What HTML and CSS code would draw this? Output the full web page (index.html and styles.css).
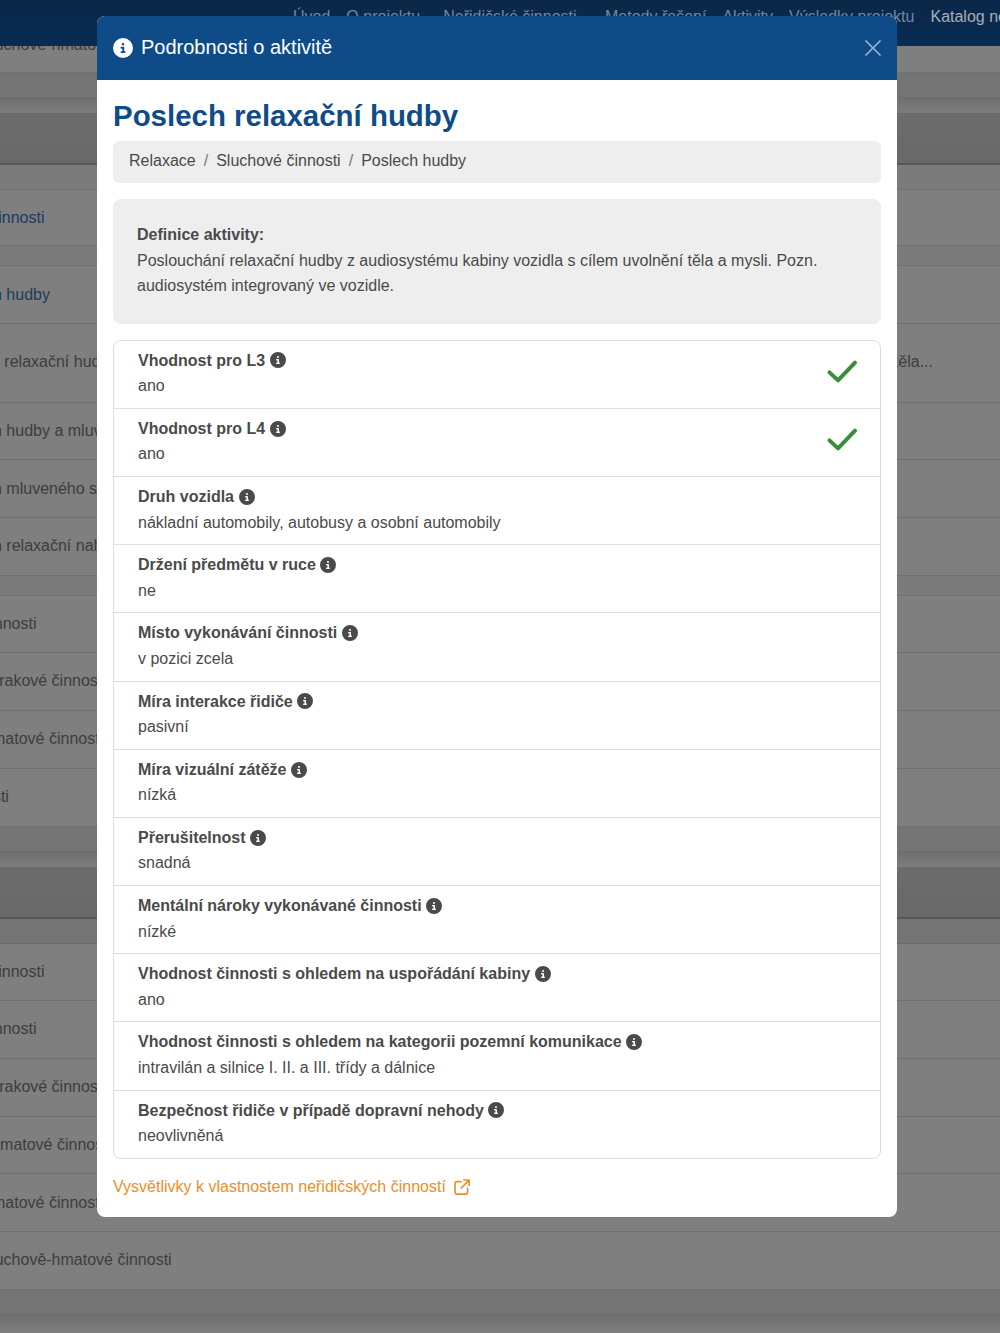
FILE: index.html
```html
<!DOCTYPE html>
<html lang="cs">
  <head>
    <title>Podrobnosti o aktivitě</title>
    <meta charset="utf-8">
    <link rel="stylesheet" href="styles.css">
  </head>
  <body>

  <svg class="defs" width="0" height="0">
    <symbol id="i-info" viewBox="0 0 512 512">
      <path d="M256 512A256 256 0 1 0 256 0a256 256 0 1 0 0 512zM216 336h24V272H216c-13.3 0-24-10.7-24-24s10.7-24 24-24h48c13.3 0 24 10.7 24 24v88h8c13.3 0 24 10.7 24 24s-10.7 24-24 24H216c-13.3 0-24-10.7-24-24s10.7-24 24-24zm40-208a32 32 0 1 1 0 64 32 32 0 1 1 0-64z"/>
    </symbol>
    <symbol id="i-check" viewBox="0 0 30 22" overflow="visible">
      <path d="M3.5 11.4l8.5 8L29 1.6" fill="none" stroke="currentColor" stroke-width="4" stroke-linecap="round" stroke-linejoin="round"/>
    </symbol>
  </svg>

  <nav class="topnav">
    <a>Úvod</a>
    <a class="wide">O projektu</a>
    <a>Neřidičské činnosti <span class="caret">⌄</span></a>
    <a>Metody řešení</a>
    <a>Aktivity</a>
    <a>Výsledky projektu</a>
    <a class="active">Katalog neřidičských činností</a>
  </nav>

  <main class="page">
    <div class="row first"><span class="cell lvl1">Zrakově-sluchově-hmatové činnosti</span></div>
    <div class="band"></div>
    <div class="gap"></div>
    <div class="thead"></div>
    <div class="band light"></div>
    <div class="row tall"><span class="cell lvl1 link">Sluchové činnosti</span></div>
    <div class="band thin"></div>
    <div class="row plain"><span class="cell lvl2 link">Poslech hudby</span></div>
    <div class="row xl"><span class="cell lvl3">Poslech relaxační hudby</span><span class="desc">Poslech relaxační hudby s cílem uvolnění těla...</span></div>
    <div class="row"><span class="cell lvl2">Poslech hudby a mluveného slova</span></div>
    <div class="row plain"><span class="cell lvl2">Poslech mluveného slova</span></div>
    <div class="row"><span class="cell lvl2">Poslech relaxační nahrávky</span></div>
    <div class="band thin"></div>
    <div class="row"><span class="cell lvl1">Zrakové činnosti</span></div>
    <div class="row"><span class="cell lvl1">Sluchově-zrakové činnosti</span></div>
    <div class="row"><span class="cell lvl1">Zrakově-hmatové činnosti</span></div>
    <div class="row"><span class="cell lvl1">Ostatní části</span></div>
    <div class="band"></div>
    <div class="gap"></div>
    <div class="thead"></div>
    <div class="band"></div>
    <div class="row"><span class="cell lvl1">Sluchové činnosti</span></div>
    <div class="row"><span class="cell lvl1">Zrakové činnosti</span></div>
    <div class="row"><span class="cell lvl1">Sluchově-zrakové činnosti</span></div>
    <div class="row"><span class="cell lvl1">Sluchově-hmatové činnosti</span></div>
    <div class="row plain"><span class="cell lvl1">Zrakově-hmatové činnosti</span></div>
    <div class="row"><span class="cell lvl1">Zrakově-sluchově-hmatové činnosti</span></div>
    <div class="band"></div>
    <div class="gap"></div>
  </main>

  <section class="modal">
    <header class="modal-head">
      <svg class="head-icon"><use href="#i-info"/></svg>
      <h2>Podrobnosti o aktivitě</h2>
      <svg class="close" viewBox="0 0 16 16"><path d="M.5.5l15 15M15.5.5l-15 15" fill="none" stroke="currentColor" stroke-width="1.6"/></svg>
    </header>
    <div class="modal-body">
      <h1>Poslech relaxační hudby</h1>
      <ol class="crumbs">
        <li>Relaxace</li>
        <li>Sluchové činnosti</li>
        <li>Poslech hudby</li>
      </ol>
      <div class="definition">
        <strong>Definice aktivity:</strong><br>
        Poslouchání relaxační hudby z audiosystému kabiny vozidla s cílem uvolnění těla a mysli. Pozn. audiosystém integrovaný ve vozidle.
      </div>
      <ul class="props">
        <li>
          <div><div class="prop-name">Vhodnost pro L3 <svg class="tip"><use href="#i-info"/></svg></div>ano</div>
          <svg class="check"><use href="#i-check"/></svg>
        </li>
        <li>
          <div><div class="prop-name">Vhodnost pro L4 <svg class="tip"><use href="#i-info"/></svg></div>ano</div>
          <svg class="check"><use href="#i-check"/></svg>
        </li>
        <li><div><div class="prop-name">Druh vozidla <svg class="tip"><use href="#i-info"/></svg></div>nákladní automobily, autobusy a osobní automobily</div></li>
        <li><div><div class="prop-name">Držení předmětu v ruce <svg class="tip"><use href="#i-info"/></svg></div>ne</div></li>
        <li><div><div class="prop-name">Místo vykonávání činnosti <svg class="tip"><use href="#i-info"/></svg></div>v pozici zcela</div></li>
        <li><div><div class="prop-name">Míra interakce řidiče <svg class="tip"><use href="#i-info"/></svg></div>pasivní</div></li>
        <li><div><div class="prop-name">Míra vizuální zátěže <svg class="tip"><use href="#i-info"/></svg></div>nízká</div></li>
        <li><div><div class="prop-name">Přerušitelnost <svg class="tip"><use href="#i-info"/></svg></div>snadná</div></li>
        <li><div><div class="prop-name">Mentální nároky vykonávané činnosti <svg class="tip"><use href="#i-info"/></svg></div>nízké</div></li>
        <li><div><div class="prop-name">Vhodnost činnosti s ohledem na uspořádání kabiny <svg class="tip"><use href="#i-info"/></svg></div>ano</div></li>
        <li><div><div class="prop-name">Vhodnost činnosti s ohledem na kategorii pozemní komunikace <svg class="tip"><use href="#i-info"/></svg></div>intravilán a silnice I. II. a III. třídy a dálnice</div></li>
        <li><div><div class="prop-name">Bezpečnost řidiče v případě dopravní nehody <svg class="tip"><use href="#i-info"/></svg></div>neovlivněná</div></li>
      </ul>
      <a class="explain">Vysvětlivky k vlastnostem neřidičských činností
        <svg viewBox="0 0 16 16"><path d="M7 2.6H3A2 2 0 0 0 1 4.6v8.6a2 2 0 0 0 2 2h8.6a2 2 0 0 0 2-2V9.4M9.8 1h5.4v5.4M15 1.2L7.2 9" fill="none" stroke="currentColor" stroke-width="1.7" stroke-linecap="round" stroke-linejoin="round"/></svg>
      </a>
    </div>
  </section>

  </body>
</html>
```

FILE: styles.css
```css
html, body {
  margin: 0;
  padding: 0;
  height: 100%;
}
body {
  position: relative;
  overflow: hidden;
  background: #7f7f7f;
  color: #4a4a4a;
  font-family: "Liberation Sans", Arial, sans-serif;
  font-size: 16px;
  line-height: 25.6px;
}

.defs {
  position: absolute;
}

/* top bar, sits under the dialog */
.topnav {
  position: absolute;
  top: 0;
  left: 0;
  right: 0;
  height: 46px;
  z-index: 2;
  display: flex;
  gap: 16px;
  padding: 4px 0 0 293px;
  box-sizing: border-box;
  background: linear-gradient(#0a2748, #082c52);
  color: #75879b;
  white-space: nowrap;
}
.topnav .wide {
  margin-right: 7px;
}
.topnav .active {
  color: #a6afb9;
}
.caret {
  font-size: 9px;
}

/* dimmed page behind the dialog */
.page {
  padding-top: 15px;
}
.row {
  display: flex;
  align-items: center;
  height: 57.7px;
  padding-bottom: 1px;
  border-bottom: 1px solid #707070;
  box-sizing: border-box;
  color: #3d3d3d;
  white-space: nowrap;
}
.row.plain {
  padding-bottom: 0;
}
.row.first {
  height: 58px;
  padding: 3px 0 0;
}
.row.tall {
  height: 56px;
  padding-bottom: 0;
}
.row.xl {
  height: 79px;
}
.cell.lvl1 {
  margin-left: -80px;
}
.cell.lvl2 {
  margin-left: -55px;
}
.cell.lvl3 {
  margin-left: -57px;
}
.cell.link {
  color: #1c3b5e;
}
.desc {
  margin-left: auto;
  margin-right: 67px;
}
.band {
  height: 25px;
  box-sizing: border-box;
  background: #747474;
  border-bottom: 1px solid #6b6b6b;
}
.band.light {
  background: #7b7b7b;
  border-bottom-color: #727272;
}
.band.thin {
  height: 20px;
  background: #7b7b7b;
  border-bottom-color: #727272;
}
.gap {
  height: 15px;
  background: linear-gradient(#6f6f6f, #7d7d7d);
}
.thead {
  height: 52px;
  box-sizing: border-box;
  background: linear-gradient(#6c6c6c, #696969);
  border-bottom: 2px solid #585858;
}

/* dialog */
.modal {
  position: absolute;
  top: 16px;
  left: 97px;
  width: 800px;
  z-index: 3;
  background: #fff;
  border-radius: 8px;
  overflow: hidden;
}
.modal-head {
  display: flex;
  align-items: center;
  height: 64px;
  padding: 0 16px;
  box-sizing: border-box;
  background: #0f4c87;
  color: #fff;
}
.modal-head h2 {
  margin: 0;
  font-size: 20px;
  font-weight: 400;
}
.head-icon {
  width: 20px;
  height: 20px;
  margin-right: 8px;
  fill: #fff;
}
.close {
  width: 16px;
  height: 16px;
  margin-left: auto;
  color: #8fb0d0;
}
.modal-body {
  padding: 16px;
}
.modal-body h1 {
  margin: 0 0 6px;
  padding-top: 1px;
  color: #0f4c87;
  font-size: 29.44px;
  line-height: 38.4px;
}
.crumbs {
  display: flex;
  margin: 0 0 16px;
  padding: 7px 16px 9px;
  list-style: none;
  background: #eee;
  border-radius: 6px;
}
.crumbs li + li {
  padding-left: 8px;
}
.crumbs li + li::before {
  content: "/";
  padding-right: 8px;
  color: #777;
}
.definition {
  margin-bottom: 15.8px;
  padding: 23px 24px 25px;
  background: #eee;
  border-radius: 8px;
}
.props {
  margin: 0 0 15.2px;
  padding: 0;
  list-style: none;
  border: 1px solid #ddd;
  border-radius: 8px;
}
.props li {
  display: flex;
  align-items: center;
  justify-content: space-between;
  padding: 7px 24px 9px;
  border-bottom: 1px solid #ddd;
}
.props li:last-child {
  border-bottom: 0;
}
.prop-name {
  display: flex;
  align-items: center;
  gap: 4.5px;
  font-weight: 700;
}
.tip {
  width: 16px;
  height: 16px;
  fill: #4a4a4a;
}
.check {
  width: 30px;
  height: 22px;
  margin-bottom: 2px;
  overflow: visible;
  color: #388e3c;
}
.explain {
  display: flex;
  align-items: center;
  gap: 8px;
  margin-bottom: 1px;
  color: #ed8e27;
}
.explain svg {
  width: 16px;
  height: 16px;
}
```
